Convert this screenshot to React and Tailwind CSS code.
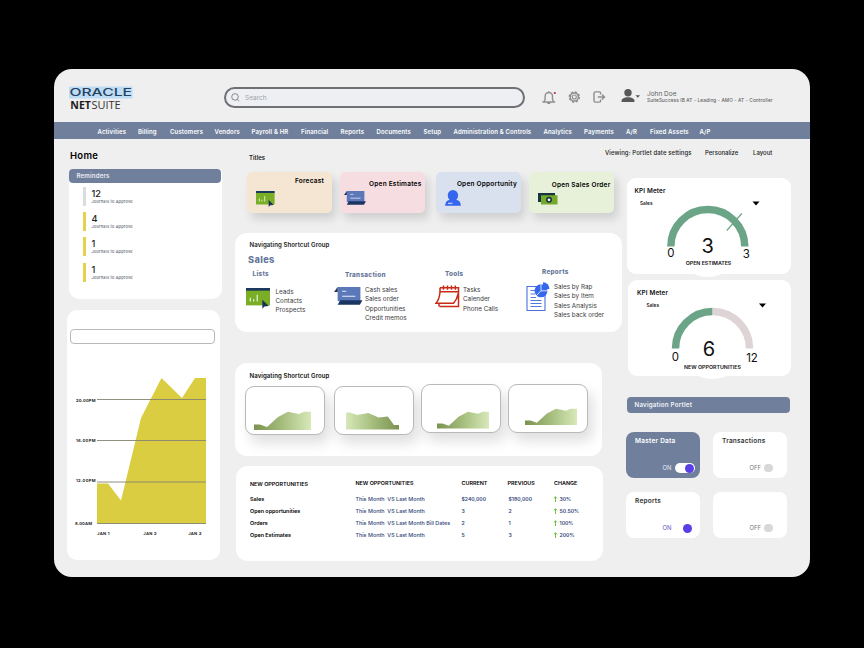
import React from "react";

const NAV = [
  "Activities", "Billing", "Customers", "Vendors", "Payroll & HR", "Financial", "Reports", "Documents",
  "Setup", "Administration & Controls", "Analytics", "Payments", "A/R", "Fixed Assets", "A/P",
];

function Logo() {
  return (
    <svg className="block" width="66" height="26" viewBox="69 86 66 26">
      <rect x="69" y="86.5" width="63.5" height="12" fill="#bfdcf5" />
      <text x="69.4" y="95.7" fontFamily="Inter, sans-serif" fontWeight="500" fontSize="10.2" textLength="62.6" lengthAdjust="spacingAndGlyphs" fill="#24425f">ORACLE</text>
      <text x="70.3" y="108.8" fontFamily="'Open Sans', sans-serif" fontWeight="700" fontSize="10.8" textLength="20.6" lengthAdjust="spacingAndGlyphs" fill="#1b1b1b">NET</text>
      <text x="91.4" y="108.8" fontFamily="'Open Sans', sans-serif" fontWeight="400" fontSize="10.8" textLength="29.2" lengthAdjust="spacingAndGlyphs" fill="#333">SUITE</text>
    </svg>
  );
}

function Header() {
  return (
    <header className="flex h-[53px] pl-[15px]">
      <div className="mt-[17px] w-[155px]"><Logo /></div>
      <div className="mt-[18px] flex h-[21px] w-[301px] items-center gap-[5px] rounded-full border-2 border-[#6f7073] bg-[#eeeff3] pl-[5px]">
        <svg width="9" height="9" viewBox="0 0 9 9" fill="none" stroke="#7d7f83" strokeWidth="0.9"><circle cx="4" cy="3.9" r="3.3" /><path d="M6.3 6.3 8 8.3" /></svg>
        <span className="mt-[2px] text-[6.5px] text-[#a0a2a7]">Search</span>
      </div>
      <svg className="ml-[15px] block" width="106" height="53" viewBox="540 69 106 53" fill="none" stroke="#8f8f8f" strokeWidth="1.4">
        <path d="M542.4 102h12.8M544.4 101.600v-1l.7-1v-3.400a3.700 3.700 0 0 1 7.400 0v3.400l.7 1v1M548.800 92.500v-1.300M547.300 103.300h3" />
        <circle cx="554.8" cy="93" r="1.1" fill="#c22250" stroke="none" />
        <circle cx="574.3" cy="97" r="5" strokeWidth="1.5" strokeDasharray="2.2 1.700" />
        <circle cx="574.3" cy="97" r="4.1" strokeWidth="1.500" />
        <circle cx="574.3" cy="97" r="2" strokeWidth="1.200" />
        <path d="M600.6 94.4v-1.4q0-1.1-1.1-1.1h-4.2q-1.3 0-1.3 1.3v7.6q0 1.3 1.3 1.3h4.2q1.1 0 1.1-1.1v-1.4M597.8 97h6.400M602 94.6l2.5 2.4-2.5 2.4" />
        <g fill="#58585a" stroke="none">
          <circle cx="628" cy="92.8" r="3.7" />
          <path d="M621.6 102v-1.4c0-2 3-3.3 6.4-3.3s6.400 1.300 6.400 3.300v1.400z" />
          <path d="M635.500 95.300h4.600l-2.300 2.500z" />
        </g>
      </svg>
      <div className="mt-[21px] ml-px whitespace-nowrap text-[#626262]">
        <p className="text-[6.500px] leading-[8px]">John Doe</p>
        <p className="-mt-px text-[4.700px] leading-[6px] font-medium tracking-[0.027em]">SuiteSuccess IB AT - Leading - AMO - AT - Controller</p>
      </div>
    </header>
  );
}

function Nav() {
  return (
    <nav className="grid h-[17px] grid-cols-[40.5px_32px_44.5px_37px_49.5px_39.5px_36px_47px_30px_90px_40.5px_42px_24px_49.500px_auto] items-center bg-[#70809c] pt-[1.500px] pl-[43.500px] text-[6px] font-semibold whitespace-nowrap text-white">
      {NAV.map((n) => <span key={n} className="tracking-[0.025em]">{n}</span>)}
    </nav>
  );
}

function Reminder({ n, bar, className }) {
  return (
    <div className={"flex h-[19px] " + className}>
      <span className={"mr-[6px] w-[2.500px] " + bar} />
      <div>
        <p className="text-[9.200px] leading-[13px] font-medium text-[#222]">{n}</p>
        <p className="text-[3.900px] leading-[4px] font-medium tracking-[0.05em] text-[#59616e]">Journals to Approve</p>
      </div>
    </div>
  );
}

function TimeChart() {
  const lines = [[399.5, "20.00PM", 400.3], [440.5, "16.00PM", 440.4], [482, "12.00PM", 480.7], [523.5, "8.00AM", 523.3]];
  return (
    <svg className="block" width="153" height="200" viewBox="67 345 153 200" fontFamily="Inter, sans-serif" fontWeight="700" fontSize="4.1" fill="#222">
      <path d="M97 483.600H108L121 500.600 141 418 161.500 378 182 398 195 378H206V523.500H97Z" fill="#dbcd42" />
      {lines.map(([y, t, ty]) => (
        <g key={t}>
          <path d={"M97 " + y + "H206"} stroke="#85836f" strokeWidth="0.9" />
          <text x={t === "8.00AM" ? 75 : 76} y={ty + 1.5} textLength={t === "8.00AM" ? 17 : 19.5}>{t}</text>
        </g>
      ))}
      <text x="97" y="535.300" textLength="12.5">JAN 1</text>
      <text x="143.300" y="535" textLength="13.300">JAN 2</text>
      <text x="188.300" y="535" textLength="13">JAN 3</text>
    </svg>
  );
}

function Left() {
  return (
    <aside className="w-[181px] shrink-0 pl-[13px]">
      <h1 className="mt-[9px] ml-[3px] text-[9.500px] leading-[16px] font-semibold tracking-[0.03em] text-black">Home</h1>
      <section className="mt-[5px] ml-[2px] h-[129.500px] w-[153px] rounded-t-[4px] rounded-b-[10px] bg-white">
        <h2 className="h-[14px] w-[152px] rounded-[4px] bg-[#70809c] pl-[7.500px] text-[6.200px] leading-[14px] font-semibold tracking-[0.02em] text-[#e8ebf2]">Reminders</h2>
        <div className="pt-[4px] pl-[14px]">
          <Reminder n="12" bar="bg-[#dcdcdc]" className="" />
          <Reminder n="4" bar="bg-[#e5d14c]" className="mt-[6.300px]" />
          <Reminder n="1" bar="bg-[#e5d14c]" className="mt-[6px]" />
          <Reminder n="1" bar="bg-[#e5d14c]" className="mt-[6.500px]" />
        </div>
      </section>
      <section className="mt-[11px] h-[250px] w-[153px] rounded-[10px] bg-white pt-[19.500px]">
        <div className="ml-[3px] h-[15px] w-[145px] rounded-[4px] border border-[#b9b9bc]" />
        <div className="mt-px"><TimeChart /></div>
      </section>
    </aside>
  );
}

function BoardIcon({ w }) {
  return (
    <svg width={w} height={w * 0.86} viewBox="0 0 24 20.600">
      <path d="M0 0H23.500V17H0Z" fill="#79ae26" /><path d="M0 0H23.500V2.600H0Z" fill="#1b3a5b" />
      <path d="M4.200 9.500V13.200M7.500 11V13.200M11 6.500V13.200" stroke="#e6f2d3" strokeWidth="1.200" />
      <path d="M16 11.500V20.200L18.100 18.100 22.400 17.600Z" fill="#1b3252" />
    </svg>
  );
}

function ScrollIcon({ w }) {
  return (
    <svg width={w} height={w * 0.64} viewBox="0 0 28 18">
      <path d="M3.500 0H26V14H3.500Z" fill="#5b78b9" /><path d="M3.500 0 0 5H3.500Z" fill="#1b2f57" />
      <path d="M6 13.200H28L25.500 17.500H3.500Z" fill="#1b3563" />
      <path d="M8 4.300H12M8 9.200H21" stroke="#e7edf8" strokeWidth="1" />
    </svg>
  );
}

function PersonIcon() {
  return (
    <svg width="16" height="16" viewBox="0 0 16 16"><path d="M2.700 5.200a5.200 5.200 0 0 1 10.400 0q0 3-1.800 4.600 4.300.700 4.600 6H.1Q.4 10.500 4.600 9.800 2.700 8.200 2.700 5.200Z" fill="#3566ee" /><path d="M3 13.300H7.500" stroke="#dbe5ff" strokeWidth="1" /></svg>
  );
}

function MoneyIcon() {
  return (
    <svg width="20" height="12" viewBox="0 0 20 12"><path d="M0 0H17V9H0Z" fill="#17353f" /><path d="M3 2.200H19.500V11.500H3Z" fill="#74a92c" /><circle cx="11" cy="6.800" r="3" fill="#17353f" /><circle cx="11" cy="6.800" r="1.400" fill="#fff" /></svg>
  );
}

function CalendarIcon() {
  return (
    <svg width="25" height="24" viewBox="0 0 25 24" fill="none" stroke="#c92a16" strokeWidth="1.500">
      <path d="M5 2.700H23.500V21.500H4.500M5 6.800H23.500M5 2.700V7Q4.500 14 1 18.300H18.500Q22 14.500 23.300 8.500M4 18.500V21.500M8.500 .5V4.700M12.500 .5V4.700M16.500 .5V4.700M20.300 .5V4.700" />
    </svg>
  );
}

function ReportIcon() {
  return (
    <svg width="24" height="30" viewBox="0 0 24 30">
      <path d="M1 4.500H19V28.500H1Z" fill="#fff" stroke="#4b71d8" strokeWidth="1.100" />
      <path d="M4.500 8.500H10M4.500 12H9M4.500 15.500H10M4.500 18.500H15.500M4.500 21.500H15.500M4.500 24.500H15.500" stroke="#5479da" strokeWidth="1" />
      <circle cx="15" cy="8.800" r="6.500" fill="#3566ee" />
      <path d="M15 8.800V1.500M15 8.800H22M15 8.800 10 14" stroke="#fff" strokeWidth="0.800" />
      <path d="M17 7V.3A6.800 6.800 0 0 1 23.500 7Z" fill="#3566ee" />
    </svg>
  );
}

function Tile({ label, className, labelClass, iconClass, children }) {
  return (
    <div className={"h-[40.500px] w-[85px] rounded-[5px] shadow-[4px_6px_9px_rgba(0,0,0,0.13)] " + className}>
      <p className={"text-right text-[6.500px] leading-[8px] font-semibold tracking-[0.035em] whitespace-nowrap text-black " + labelClass}>{label}</p>
      <div className={iconClass}>{children}</div>
    </div>
  );
}

function Group({ title, items, className, titleClass, iconClass, listClass, children }) {
  return (
    <div className={"shrink-0 " + className}>
      <h4 className={"text-[6.300px] leading-[8px] font-extrabold tracking-[0.05em] text-[#66779a] " + titleClass}>{title}</h4>
      <div className="flex items-start">
        <div className={"shrink-0 " + iconClass}>{children}</div>
        <ul className={"text-[6.300px] leading-[9.400px] whitespace-nowrap text-[#3a3a3c] " + listClass}>
          {items.map((i) => <li key={i}>{i}</li>)}
        </ul>
      </div>
    </div>
  );
}

function Shortcuts() {
  return (
    <section className="mt-[20px] h-[99.500px] w-[386.500px] rounded-[12px] bg-white pt-[8.500px]">
      <h2 className="ml-[14.500px] text-[6.100px] leading-[8px] font-semibold tracking-[0.01em] text-[#222]">Navigating Shortcut Group</h2>
      <h3 className="mt-[4.500px] ml-[13px] text-[9.200px] leading-[12px] font-extrabold tracking-[0.04em] text-[#66779a]">Sales</h3>
      <div className="flex pl-[11px]">
        <Group title="Lists" items={["Leads", "Contacts", "Prospects"]} className="mt-[4.500px] w-[88px]" titleClass="ml-[6.500px]" iconClass="mt-[10px] w-[29.500px]" listClass="mt-[9.500px]"><BoardIcon w={24.500} /></Group>
        <Group title="Transaction" items={["Cash sales", "Sales order", "Opportunities", "Credit memos"]} className="mt-[5.500px] w-[101px]" titleClass="ml-[11px]" iconClass="mt-[8px] w-[31px]" listClass="mt-[7px]"><ScrollIcon w={28.500} /></Group>
        <Group title="Tools" items={["Tasks", "Calender", "Phone Calls"]} className="mt-[4.500px] w-[91px]" titleClass="ml-[10px]" iconClass="mt-[6.500px] w-[28px]" listClass="mt-[8px]"><CalendarIcon /></Group>
        <Group title="Reports" items={["Sales by Rap", "Sales by Item", "Sales Analysis", "Sales back order"]} className="mt-[2.500px]" titleClass="ml-[16px]" iconClass="mt-[6px] w-[28px]" listClass="mt-[7px]"><ReportIcon /></Group>
      </div>
    </section>
  );
}

function MiniChart({ id, flip, className, chartClass }) {
  const w = flip ? 53 : 57;
  return (
    <div className={"h-[49px] w-[80px] shrink-0 rounded-[9px] border border-[#b9b9b9] bg-white shadow-[5px_8px_13px_rgba(0,0,0,0.13)] " + className}>
      <svg className={"block " + chartClass} width={w} height="19" viewBox="0 0 57 19" preserveAspectRatio="none">
        <defs><linearGradient id={id}><stop offset="0" stopColor="#7b9150" /><stop offset="0.500" stopColor="#a5be7d" /><stop offset="1" stopColor="#d8e8b9" /></linearGradient></defs>
        <g transform={flip ? "translate(57 0) scale(-1 1)" : undefined}>
          <path d={flip ? "M0 14H5.500L12 5.500 22 6.500 33 2 45 4 53 1.500H57V18.500H0Z" : "M0 13.500H6L13 16 24 6 34 .8 45 3 50 .8H57V19H0Z"} fill={"url(#" + id + ")"} />
        </g>
      </svg>
    </div>
  );
}

const ROWS = [
  ["Sales", "This Month  VS Last Month", "$240,000", "$180,000", "30%"],
  ["Open opportunities", "This Month  VS Last Month", "3", "2", "50.50%"],
  ["Orders", "This Month  VS Last Month Bill Dates", "2", "1", "100%"],
  ["Open Estimates", "This Month  VS Last Month", "5", "3", "200%"],
];

function Table() {
  return (
    <section className="mt-[10.500px] ml-[0.500px] h-[95px] w-[367.500px] rounded-[12px] bg-white pt-[12.500px] pl-[14.500px] text-[5.400px] whitespace-pre">
      <div className="grid grid-cols-[105.500px_106px_46px_46.500px_auto] leading-[9px] font-semibold text-black">
        <span className="relative top-px">NEW OPPORTUNITIES</span><span>NEW OPPORTUNITIES</span><span>CURRENT</span><span>PREVIOUS</span><span>CHANGE</span>
      </div>
      <div className="mt-[6px]">
        {ROWS.map((r) => (
          <div key={r[0]} className="grid h-[12px] grid-cols-[105.500px_106px_47px_45px_auto] items-center text-[#34467a]">
            <span className="font-semibold text-black">{r[0]}</span>
            <span className="font-medium">{r[1]}</span>
            <span className="text-[5.100px] font-semibold">{r[2]}</span>
            <span className="text-[5.100px] font-semibold">{r[3]}</span>
            <span className="flex items-center gap-[2px] text-[5.100px] font-semibold"><svg className="-ml-px" width="5" height="6" viewBox="0 0 5 6" fill="none" stroke="#6cc044" strokeWidth="1"><path d="M2.500 6V.8M.9 2.400 2.500.8 4.100 2.400" /></svg>{r[4]}</span>
          </div>
        ))}
      </div>
    </section>
  );
}

function Middle() {
  return (
    <main className="w-[391px] shrink-0">
      <div className="flex pl-[12px]">
        <Tile label="Forecast" className="bg-[#f5e5d3]" labelClass="pt-[5px] pr-[8px]" iconClass="mt-[5.500px] ml-[8.500px]"><BoardIcon w={19} /></Tile>
        <Tile label="Open Estimates" className="ml-[7.500px] bg-[#f5dde2]" labelClass="pt-[7.500px] pr-[3px]" iconClass="mt-[3.500px] ml-[4.500px]"><ScrollIcon w={22} /></Tile>
        <Tile label="Open Opportunity" className="ml-[11px] bg-[#dae1ee]" labelClass="pt-[7.500px] pr-[3.500px]" iconClass="mt-[2.500px] ml-[9.500px]"><PersonIcon /></Tile>
        <Tile label="Open Sales Order" className="ml-[8.500px] bg-[#e7f0d8]" labelClass="pt-[8.500px] pr-[3.500px]" iconClass="mt-[4.500px] ml-[9px]"><MoneyIcon /></Tile>
      </div>
      <Shortcuts />
      <section className="mt-[30.500px] h-[93px] w-[367px] rounded-[12px] bg-white pt-[8.500px]">
        <h2 className="ml-[14.500px] text-[6.100px] leading-[9px] font-semibold tracking-[0.01em] text-[#111]">Navigating Shortcut Group</h2>
        <div className="mt-[3.500px] flex items-start pl-[10px]">
          <MiniChart id="m1" className="mt-[2.500px]" chartClass="mt-[24px] ml-[8px]" />
          <MiniChart id="m2" flip className="mt-[2.500px] ml-[8.500px]" chartClass="mt-[23.500px] ml-[11px]" />
          <MiniChart id="m3" className="mt-[0.500px] ml-[7px]" chartClass="mt-[26px] ml-[15px] h-[17.500px] w-[52px]" />
          <MiniChart id="m4" className="ml-[7.500px]" chartClass="mt-[23px] ml-[15.500px] h-[17.500px] w-[52px]" />
        </div>
      </section>
      <Table />
    </main>
  );
}

function Gauge({ x, value, max, label, half, x0, salesX, arrowX }) {
  return (
    <svg className="block overflow-visible" width="163.500" height="96" viewBox="0 0 163.500 96" fontFamily="Inter, sans-serif" fill="#111">
      <path d={"M" + (x - 16) + " 95Q" + x + " 103 " + (x + 16) + " 95Z"} fill="#fff" />
      <text x={x0} y="14.500" fontSize="6.300" fontWeight="600" textLength="31">KPI Meter</text>
      <text x={salesX} y="26.700" fontSize="4.700" fontWeight="600" textLength="12.500">Sales</text>
      <path d={"M" + arrowX + " 23.500h7l-3.500 4z"} fill="#000" />
      <g fill="none" strokeWidth="7.500" stroke="#6ca487">
        {half ? (
          <><path d={"M" + (x - 37) + " 68.500a37 37 0 0 1 37 -37"} /><path d={"M" + (x + 0.400) + " 31.500a37 37 0 0 1 36.600 37"} stroke="#dfd4d5" /></>
        ) : (
          <><path d={"M" + (x - 37) + " 68.500a37 37 0 0 1 74 0"} /><path d={"M" + (x + 19) + " 52.500 " + (x + 34) + " 35.500"} strokeWidth="1.200" /></>
        )}
      </g>
      <text x={half ? x - 3.500 : x} y={half ? 76 : 74.500} fontSize="20" textAnchor="middle" fontWeight="400">{value}</text>
      <text x={x - 37} y={half ? 81 : 79} fontSize="11.500" textAnchor="middle">0</text>
      <text x={half ? x + 39.500 : x + 38.500} y={half ? 81.500 : 80} fontSize="11.500" textAnchor="middle">{max}</text>
      <text x={half ? x - 28.500 : x - 22} y={half ? 88.500 : 87.300} fontSize="5.300" fontWeight="600" textLength={half ? 57 : 45.500}>{label}</text>
    </svg>
  );
}

function Switch({ title, state, onText, className, children }) {
  return (
    <div className={"flex h-[46px] w-[73.500px] flex-col justify-between rounded-[8px] pb-[5px] " + className}>
      <p className="h-[9px] pt-[4.500px] pl-[9px] text-[6.500px] leading-[8px] font-semibold tracking-[0.035em] whitespace-nowrap">{title}</p>
      <div className={"flex h-[10px] items-center pl-[36.500px] text-[5.900px] font-normal " + onText}><span className="w-[12px]">{state}</span>{children}</div>
    </div>
  );
}

function Right() {
  return (
    <aside className="pt-[6px]">
      <section className="ml-px h-[96px] w-[163.500px] rounded-[9px] bg-white">
        <Gauge x={80.800} value="3" max="3" label="OPEN ESTIMATES" x0={7.500} salesX={13} arrowX={125.500} />
      </section>
      <section className="mt-[6px] ml-[1.500px] h-[96px] w-[163.500px] rounded-[9px] bg-white">
        <Gauge x={84.500} half value="6" max="12" label="NEW OPPORTUNITIES" x0={9} salesX={18.500} arrowX={131} />
      </section>
      <h2 className="mt-[21px] ml-[0.500px] h-[15.500px] w-[163px] rounded-[4px] bg-[#70809c] pl-[8px] text-[6.200px] leading-[15px] font-semibold tracking-[0.035em] text-[#f1f3f8]">Navigation Portlet</h2>
      <div className="mt-[19.500px] grid grid-cols-[74px_74px] gap-x-[13px] gap-y-[14px]">
        <Switch title="Master Data" state="ON" className="bg-[#70809c] text-white" onText="text-[#e6e9f2]"><span className="flex h-[10px] w-[20px] items-center justify-end rounded-full bg-white pr-[0.500px]"><i className="size-[9px] rounded-full bg-[#5a3ee6]" /></span></Switch>
        <Switch title="Transactions" state="OFF" className="bg-white text-[#333]" onText="text-[#777]"><i className="ml-[2.500px] size-[8.500px] rounded-full bg-[#d8d8d8]" /></Switch>
        <Switch title="Reports" state="ON" className="bg-white text-[#333]" onText="text-[#6558b8]"><i className="ml-[8.500px] size-[9px] rounded-full bg-[#5a3ee6]" /></Switch>
        <Switch title="" state="OFF" className="bg-white" onText="text-[#777]"><i className="ml-[2.500px] size-[8.500px] rounded-full bg-[#d8d8d8]" /></Switch>
      </div>
    </aside>
  );
}

export default function App() {
  return (
    <div className="h-[648px] w-[864px] overflow-hidden bg-black pt-[69px] pl-[54px] font-['Inter',sans-serif]">
      <div className="h-[508px] w-[756px] overflow-hidden rounded-[18px] bg-[#efefef]">
        <Header />
        <Nav />
        <div className="flex">
          <Left />
          <div>
            <div className="flex h-[33px] pt-[9px] text-[6px] leading-[9px] font-semibold whitespace-nowrap text-[#222]">
              <span className="mt-[5px] ml-[14px] w-[356px]">Titles</span>
              <span className="w-[100px] font-medium tracking-[0.015em]">Viewing: Portlet date settings</span>
              <span className="w-[48px] font-medium">Personalize</span>
              <span className="font-medium">Layout</span>
            </div>
            <div className="flex"><Middle /><Right /></div>
          </div>
        </div>
      </div>
    </div>
  );
}
